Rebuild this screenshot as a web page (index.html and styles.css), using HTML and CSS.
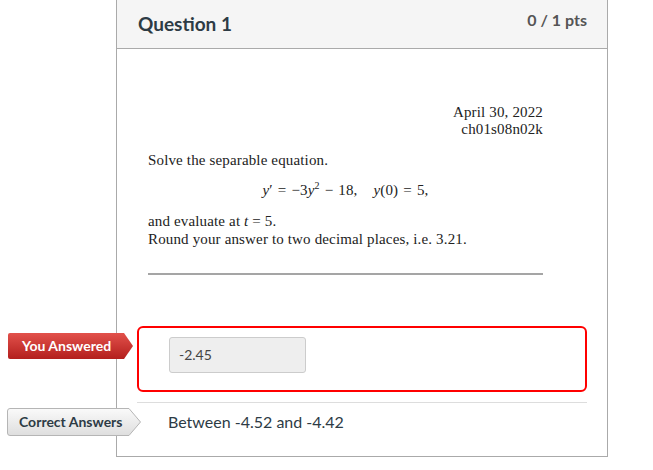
FILE: index.html
```html
<!DOCTYPE html>
<html lang="en">
<head>
    <meta charset="UTF-8">
    <title>Question 1</title>
    <link rel="stylesheet" href="styles.css">
</head>
<body>
    <div class="question">
        <div class="question-header">
            <h2 class="question-title">Question 1</h2>
            <span class="points">0 / 1 pts</span>
        </div>

        <div class="question-text">
            <div class="date">April 30, 2022<br/>ch01s08n02k</div>
            <p class="solve">Solve the separable equation.</p>
            <p class="eq"><i>y</i>&prime;<span class="op">=</span>&minus;3<i>y</i><sup>2</sup><span class="op">&minus;</span>18,<span class="gap"></span><i>y</i>(0)<span class="op">=</span>5,</p>
            <p class="evaluate">and evaluate at <i>t</i> = 5.<br/>Round your answer to two decimal places, i.e. 3.21.</p>
            <div class="rule"></div>
        </div>

        <div class="answers">
            <div class="answer wrong">
                <span class="label label-wrong">
                    <svg class="label-bg" width="126" height="26" viewBox="0 0 126 26">
                        <defs>
                            <linearGradient id="redGrad" x1="0" y1="0" x2="0" y2="1">
                                <stop offset="0" stop-color="#e2514b"/>
                                <stop offset="1" stop-color="#b31f1d"/>
                            </linearGradient>
                        </defs>
                        <path d="M2 0 H116 L125 13 L116 26 H2 Q0 26 0 24 V2 Q0 0 2 0 Z" fill="url(#redGrad)"/>
                    </svg>
                    <span class="label-text">You Answered</span>
                </span>
                <div class="answer-input">-2.45</div>
            </div>

            <div class="answer correct">
                <span class="label label-correct">
                    <svg class="label-bg" width="135" height="28" viewBox="0 0 135 28">
                        <defs>
                            <linearGradient id="grayGrad" x1="0" y1="0" x2="0" y2="1">
                                <stop offset="0" stop-color="#fafafa"/>
                                <stop offset="1" stop-color="#dedede"/>
                            </linearGradient>
                        </defs>
                        <path d="M3 0.5 H122 L133.5 14 L122 27.5 H3 Q0.5 27.5 0.5 25 V3 Q0.5 0.5 3 0.5 Z" fill="url(#grayGrad)" stroke="#b5b5b5"/>
                    </svg>
                    <span class="label-text">Correct Answers</span>
                </span>
                <span class="answer-text">Between -4.52 and -4.42</span>
            </div>
        </div>
    </div>
</body>
</html>
```

FILE: styles.css
```css
*{
    box-sizing: border-box;
}
body{
    margin: 0;
    background: #fff;
    font-family: Lato, "Open Sans", sans-serif;
    color: #2d3b45;
}
.question{
    margin-left: 116px;
    width: 492px;
    height: 457px;
    border: 1px solid #aaa;
    border-top: none;
    background: #fff;
}
.question-header{
    display: flex;
    justify-content: space-between;
    align-items: flex-start;
    height: 49px;
    padding: 0 20px 0 21px;
    background: #f5f5f5;
    border-bottom: 1px solid #aaa;
}
.question-title{
    margin: 0;
    font-size: 19px;
    font-weight: bold;
    line-height: 48px;
    color: #2d3b45;
}
.points{
    font-size: 16px;
    font-weight: bold;
    line-height: 40px;
    color: #555;
}

/* question body rendered like the latex image */
.question-text{
    width: 426px;
    padding: 55px 0 0 31px;
    font-family: "Liberation Serif", "DejaVu Serif", serif;
    font-size: 15px;
    letter-spacing: 0.15px;
    color: #222;
}
.date{
    text-align: right;
    line-height: 17px;
}
.solve{
    margin: 14px 0 0;
    line-height: 17px;
}
.eq{
    margin: 13px 0 0;
    line-height: 17px;
    text-align: center;
}
.eq .op{
    margin: 0 5px;
}
.eq .gap{
    display: inline-block;
    width: 16px;
}
.eq sup{
    font-size: 10px;
    line-height: 0;
}
.evaluate{
    margin: 13px 0 0;
    line-height: 18px;
}
.rule{
    margin-top: 25px;
    height: 2px;
    background: #a5a5a5;
}

.answers{
    margin-top: 51px;
    padding: 0 20px;
}
.answer{
    position: relative;
}
.wrong{
    height: 66px;
    padding: 9px 0 0 30px;
    border: 2px solid #f00;
    border-radius: 6px;
}
.answer-input{
    width: 137px;
    height: 36px;
    padding-left: 9px;
    line-height: 34px;
    font-size: 14px;
    color: #444;
    background: #eee;
    border: 1px solid #ccc;
    border-radius: 3px;
}
.correct{
    margin-top: 10px;
    border-top: 1px solid #ddd;
    padding: 9px 0 0 31px;
    height: 53px;
}
.answer-text{
    font-size: 16px;
    line-height: 20px;
    color: #2d3b45;
}
.label{
    position: absolute;
    display: block;
    font-size: 14px;
    font-weight: bold;
}
.label-bg{
    position: absolute;
    left: 0;
    top: 0;
}
.label-text{
    position: relative;
    display: block;
}
.label-wrong{
    left: -131px;
    top: 5px;
    width: 126px;
    height: 26px;
    color: #fff;
}
.label-wrong .label-text{
    padding-left: 14px;
    line-height: 25px;
}
.label-correct{
    left: -130px;
    top: 5px;
    width: 135px;
    height: 28px;
    color: #2d3b45;
}
.label-correct .label-text{
    padding-left: 12px;
    line-height: 27px;
}
```
